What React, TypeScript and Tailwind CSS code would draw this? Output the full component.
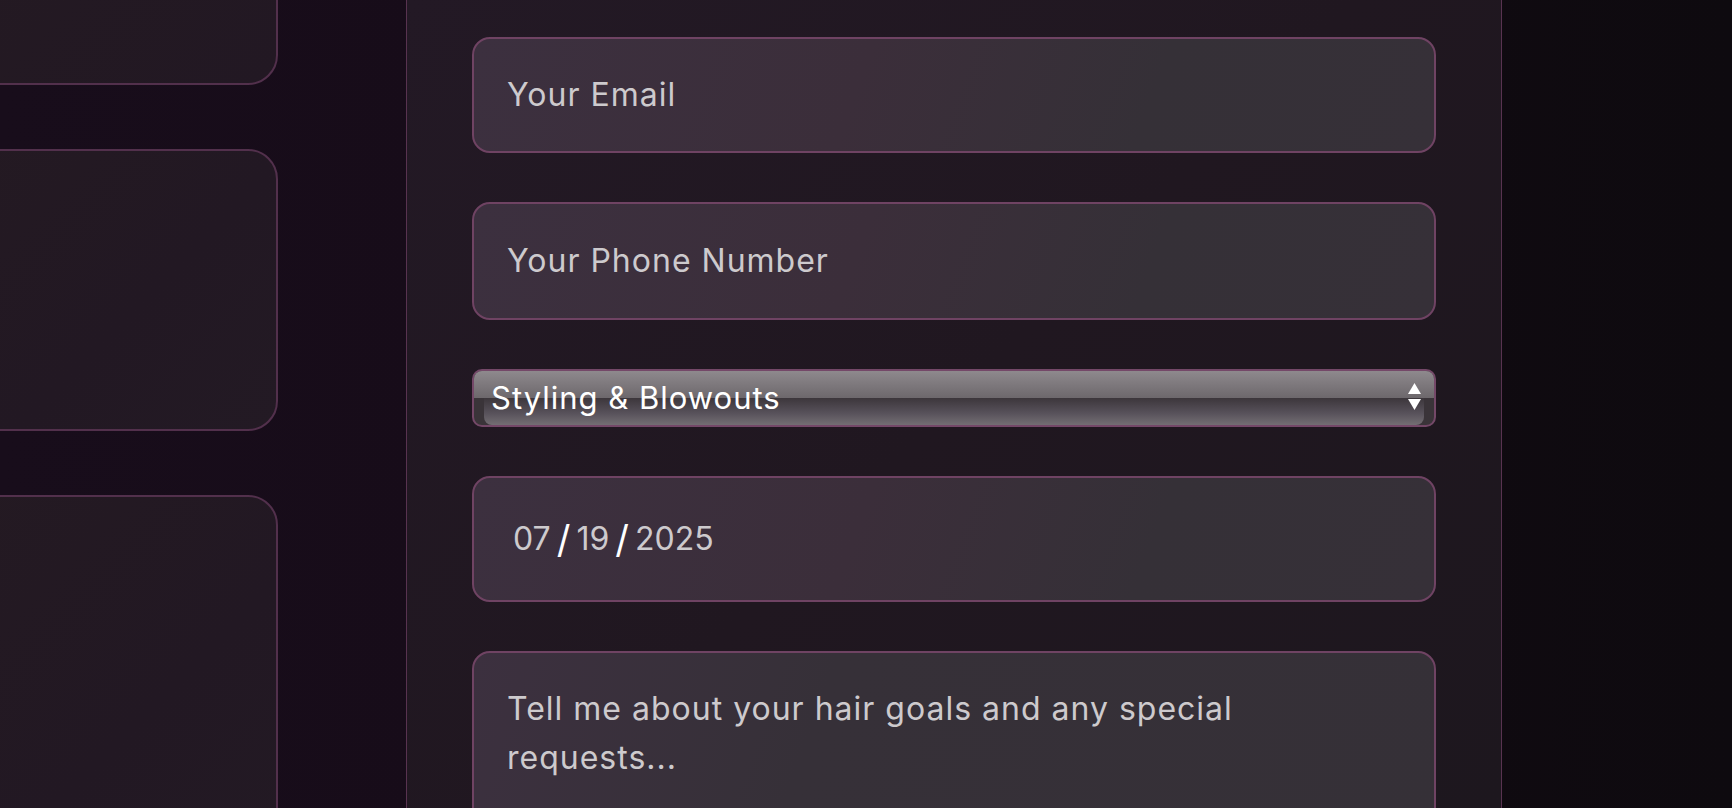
import React from "react";

const field =
  "w-full shrink-0 rounded-[18px] border-2 border-[#6f4363] bg-[linear-gradient(110deg,#3c303f_0%,#3b2e3a_40%,#353037_70%,#363038_100%)] flex items-center px-[33px] text-[32px] tracking-[1px] text-[#cdcacd]";

export default function App() {
  return (
    <div className="w-full h-[808px] overflow-hidden flex bg-[linear-gradient(to_right,#180d1b_0%,#170c19_25%,#120b13_55%,#0e0a0f_100%)] font-['Inter',sans-serif]">
      {/* Left: service cards (scrolled, partly off screen) */}
      <div className="w-[379px] ml-[-101px] shrink-0 flex flex-col gap-[64px]">
        <div className="h-[200px] shrink-0 mt-[-115px] rounded-[30px] border-2 border-[#52304c] bg-[linear-gradient(135deg,#241a22,#221823)]" />
        <div className="h-[282px] shrink-0 rounded-[30px] border-2 border-[#52304c] bg-[linear-gradient(135deg,#241a22,#221823_60%,#231a24)]" />
        <div className="h-[400px] shrink-0 rounded-[30px] border-2 border-[#52304c] bg-[linear-gradient(135deg,#241a22,#221823_60%,#231a24)]" />
      </div>

      {/* Right: booking form */}
      <div className="ml-[128px] w-[1096px] shrink-0 border-x border-[#583350] bg-[linear-gradient(135deg,#231925_0%,#201720_50%,#1d171e_100%)] px-[65px] pt-[37px] flex flex-col gap-[49px]">
        <div className={`${field} h-[116px]`}>Your Email</div>

        <div className={`${field} h-[118px]`}>Your Phone Number</div>

        {/* Select (native glossy look) */}
        <div className="relative shrink-0 h-[58px] rounded-[10px] border-2 border-[#744868] bg-[#3a3439] overflow-hidden">
          <div className="h-[27px] bg-[linear-gradient(to_bottom,#8e898d,#6d686c)]" />
          <div className="h-[27px] ml-[10px] mr-[10px] rounded-b-[8px] bg-[linear-gradient(to_bottom,#3c363b,#57515a_55%,#736e73)]" />
          <div className="absolute inset-0 flex items-center justify-between pl-[17px] pr-[12px] pb-[2px]">
            <span className="text-[31px] tracking-[1px] text-white leading-none">Styling &amp; Blowouts</span>
            <svg width="15" height="30" viewBox="0 0 15 30" className="text-white">
              <path d="M7.5 1 L14 12 L1 12 Z" fill="currentColor" />
              <path d="M1 17 L14 17 L7.5 28 Z" fill="currentColor" />
            </svg>
          </div>
        </div>

        {/* Date */}
        <div className={`${field} h-[126px] pl-[39px] tracking-normal text-[#a9a5a9]`}>
          <span>07</span>
          <span className="text-white mx-[6px] text-[38px]">/</span>
          <span>19</span>
          <span className="text-white mx-[6px] text-[38px]">/</span>
          <span>2025</span>
        </div>

        {/* Message */}
        <div className="w-full h-[240px] shrink-0 rounded-[18px] border-2 border-[#6f4363] bg-[linear-gradient(110deg,#3c303f_0%,#363038_35%,#353037_100%)] px-[33px] pt-[31px] text-[32px] tracking-[1px] leading-[49px] text-[#cdcacd]">
          Tell me about your hair goals and any special
          <br />
          requests...
        </div>
      </div>
    </div>
  );
}
